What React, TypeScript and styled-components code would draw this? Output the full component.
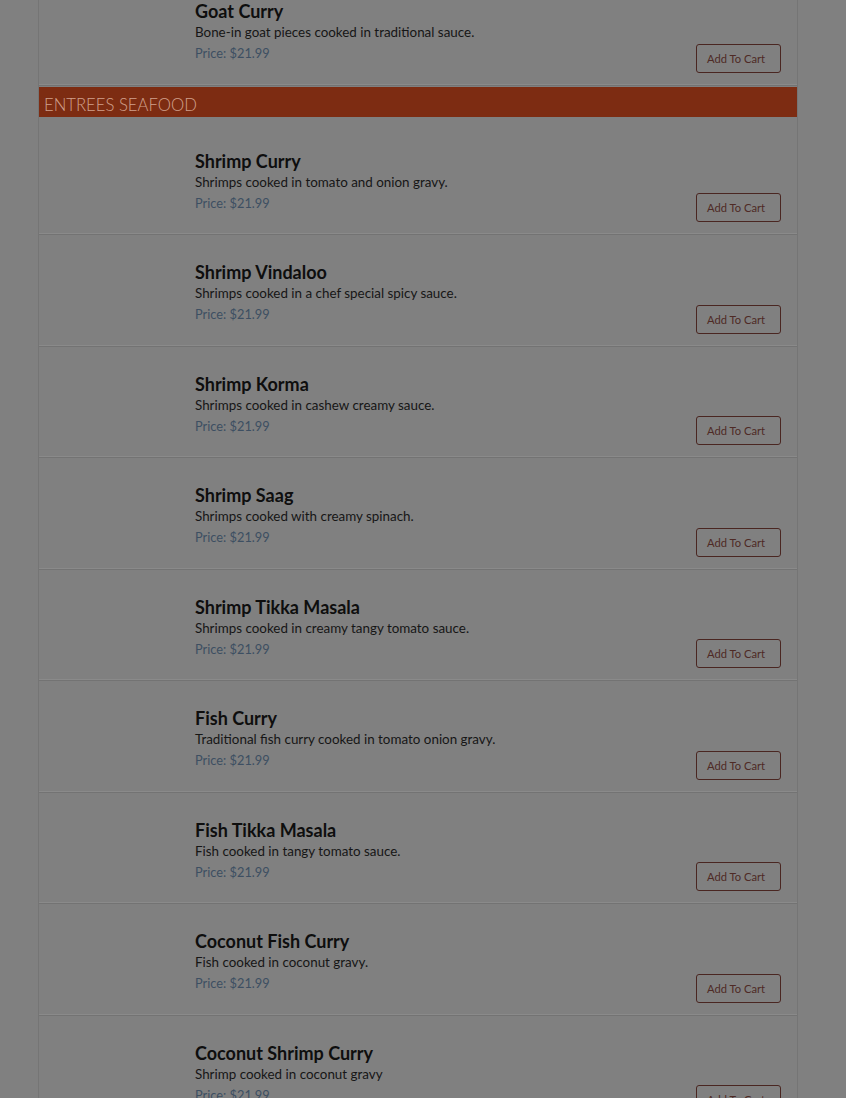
import React from "react";
import styled, { createGlobalStyle } from "styled-components";

const Global = createGlobalStyle`
  html, body { margin: 0; padding: 0; background: #808080; }
  body { font-family: "Lato", "Liberation Sans", sans-serif; overflow: hidden; }
`;

const Page = styled.div`
  width: 846px;
  height: 1098px;
  overflow: hidden;
  background: #808080;
`;

const Container = styled.div`
  width: 758px;
  margin: -25px 0 0 38px;
  border-left: 1px solid #757575;
  border-right: 1px solid #757575;
`;

const Row = styled.div`
  display: flex;
  height: 109.5px;
  box-shadow: inset 0 -1px 0 #8a8a8a;
  border-bottom: 1px solid #737373;
  margin-bottom: 1px;
`;

const Thumb = styled.div`
  width: 156px;
  flex: none;
`;

const Info = styled.div`
  flex: 1;
  padding-top: 25px;
  display: flex;
  flex-direction: column;
`;

const Title = styled.div`
  font-size: 18px;
  font-weight: 700;
  line-height: 22px;
  color: #0e0e0e;
`;

const Desc = styled.div`
  font-size: 13.4px;
  line-height: 21px;
  color: #161616;
`;

const Price = styled.div`
  font-size: 12.8px;
  line-height: 21px;
  color: #3d4f62;
`;

const Action = styled.div`
  display: flex;
  align-items: flex-end;
  padding: 0 16px 12px 0;
`;

const CartButton = styled.button`
  width: 85px;
  height: 29px;
  border: 1px solid #4a2621;
  border-radius: 3px;
  background: transparent;
  color: #4e2a25;
  font-family: inherit;
  font-size: 11.2px;
  padding: 0 5px 0 0;
  cursor: pointer;
`;

const Section = styled.div`
  height: 30px;
  background: #7d2c12;
  color: #d1a08c;
  font-size: 16.7px;
  font-weight: 300;
  line-height: 36px;
  padding-left: 5px;
  margin-bottom: 8px;
`;

type Item = { name: string; desc: string; price: string };

const goat: Item = {
  name: "Goat Curry",
  desc: "Bone-in goat pieces cooked in traditional sauce.",
  price: "$21.99",
};

const seafood: Item[] = [
  { name: "Shrimp Curry", desc: "Shrimps cooked in tomato and onion gravy.", price: "$21.99" },
  { name: "Shrimp Vindaloo", desc: "Shrimps cooked in a chef special spicy sauce.", price: "$21.99" },
  { name: "Shrimp Korma", desc: "Shrimps cooked in cashew creamy sauce.", price: "$21.99" },
  { name: "Shrimp Saag", desc: "Shrimps cooked with creamy spinach.", price: "$21.99" },
  { name: "Shrimp Tikka Masala", desc: "Shrimps cooked in creamy tangy tomato sauce.", price: "$21.99" },
  { name: "Fish Curry", desc: "Traditional fish curry cooked in tomato onion gravy.", price: "$21.99" },
  { name: "Fish Tikka Masala", desc: "Fish cooked in tangy tomato sauce.", price: "$21.99" },
  { name: "Coconut Fish Curry", desc: "Fish cooked in coconut gravy.", price: "$21.99" },
  { name: "Coconut Shrimp Curry", desc: "Shrimp cooked in coconut gravy", price: "$21.99" },
];

const MenuRow = ({ item }: { item: Item }) => (
  <Row>
    <Thumb />
    <Info>
      <Title>{item.name}</Title>
      <Desc>{item.desc}</Desc>
      <Price>Price: {item.price}</Price>
    </Info>
    <Action>
      <CartButton>Add To Cart</CartButton>
    </Action>
  </Row>
);

export default function App() {
  return (
    <Page>
      <Global />
      <Container>
        <MenuRow item={goat} />
        <Section>ENTREES SEAFOOD</Section>
        {seafood.map((it) => (
          <MenuRow key={it.name} item={it} />
        ))}
      </Container>
    </Page>
  );
}
